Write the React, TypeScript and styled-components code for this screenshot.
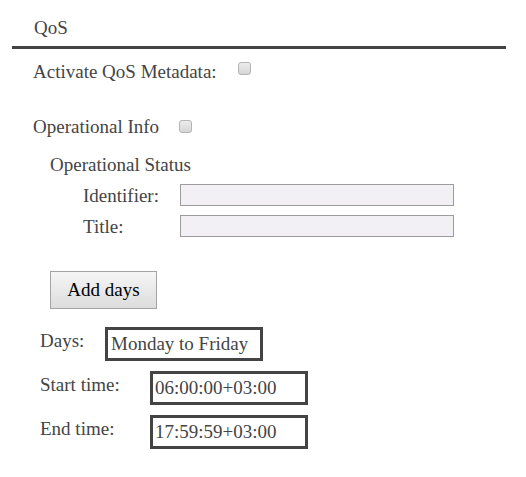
import React from "react";
import styled, { createGlobalStyle } from "styled-components";

const GlobalStyle = createGlobalStyle`
  html, body {
    margin: 0;
    padding: 0;
    background: #ffffff;
  }
  body {
    font-family: "Liberation Serif", "Times New Roman", serif;
    font-size: 19px;
    line-height: 22px;
    color: #444444;
  }
`;

const Page = styled.div`
  width: 494px;
  padding: 0 0 0 12px;
`;

const Header = styled.div`
  padding: 17px 0 7px 22px;
  border-bottom: 3px solid #444444;
  height: 22px;
`;

const Section = styled.div`
  display: flex;
  flex-direction: column;
  align-items: flex-start;
  padding-left: 21px;
`;

const CheckRow = styled.label<{ $gap: number; $top: number }>`
  display: flex;
  align-items: flex-start;
  gap: ${(p) => p.$gap}px;
  margin-top: ${(p) => p.$top}px;
  height: 22px;
`;

const Checkbox = styled.input.attrs({ type: "checkbox" })<{ $offset: number }>`
  appearance: none;
  -webkit-appearance: none;
  box-sizing: border-box;
  width: 13px;
  height: 13px;
  margin: ${(p) => p.$offset}px 0 0 0;
  border: 1px solid #b4b4b4;
  border-radius: 3px;
  background: linear-gradient(#ececec, #d6d6d6);
`;

const SubSection = styled.div`
  display: flex;
  flex-direction: column;
  margin-top: 16px;
  padding-left: 17px;
`;

const SubTitle = styled.div`
  height: 22px;
  margin-bottom: 8px;
`;

const FieldRow = styled.div<{ $bottom: number }>`
  display: flex;
  align-items: flex-start;
  height: 22px;
  padding-left: 33px;
  margin-bottom: ${(p) => p.$bottom}px;
`;

const FieldLabel = styled.span`
  width: 97px;
  padding-top: 1px;
`;

const TextInput = styled.input.attrs({ type: "text" })`
  box-sizing: border-box;
  width: 274px;
  height: 22px;
  margin: 0;
  padding: 0 4px;
  border: 1px solid #9c9c9c;
  background: #f3f0f5;
  font-family: inherit;
  font-size: 16px;
  outline: none;
`;

const AddButton = styled.button`
  box-sizing: border-box;
  width: 107px;
  height: 38px;
  margin: 34px 0 0 17px;
  padding: 0;
  border: 1px solid #a4a4a4;
  border-radius: 0;
  background: linear-gradient(#f6f6f6, #dcdcdc);
  color: #000000;
  font-family: inherit;
  font-size: 19px;
  line-height: 22px;
`;

const ValueList = styled.div`
  display: flex;
  flex-direction: column;
  gap: 10px;
  margin: 18px 0 0 7px;
`;

const ValueRow = styled.div`
  display: flex;
  align-items: flex-start;
`;

const ValueLabel = styled.span<{ $width: number }>`
  width: ${(p) => p.$width}px;
  padding-top: 3px;
`;

const ValueBox = styled.div<{ $pad: number }>`
  box-sizing: border-box;
  width: 158px;
  height: 34px;
  border: 3px solid #444444;
  padding: 3px 0 0 ${(p) => p.$pad}px;
  white-space: nowrap;
`;

export default function App() {
  return (
    <>
      <GlobalStyle />
      <Page>
        <Header>QoS</Header>
        <Section>
          <CheckRow $gap={21} $top={12}>
            Activate QoS Metadata:
            <Checkbox $offset={1} />
          </CheckRow>
          <CheckRow $gap={20} $top={33}>
            Operational Info
            <Checkbox $offset={4} />
          </CheckRow>
          <SubSection>
            <SubTitle>Operational Status</SubTitle>
            <FieldRow $bottom={9}>
              <FieldLabel>Identifier:</FieldLabel>
              <TextInput />
            </FieldRow>
            <FieldRow $bottom={0}>
              <FieldLabel>Title:</FieldLabel>
              <TextInput />
            </FieldRow>
          </SubSection>
          <AddButton>Add days</AddButton>
          <ValueList>
            <ValueRow>
              <ValueLabel $width={65}>Days:</ValueLabel>
              <ValueBox $pad={3}>Monday to Friday</ValueBox>
            </ValueRow>
            <ValueRow>
              <ValueLabel $width={110}>Start time:</ValueLabel>
              <ValueBox $pad={2}>06:00:00+03:00</ValueBox>
            </ValueRow>
            <ValueRow>
              <ValueLabel $width={110}>End time:</ValueLabel>
              <ValueBox $pad={2}>17:59:59+03:00</ValueBox>
            </ValueRow>
          </ValueList>
        </Section>
      </Page>
    </>
  );
}
